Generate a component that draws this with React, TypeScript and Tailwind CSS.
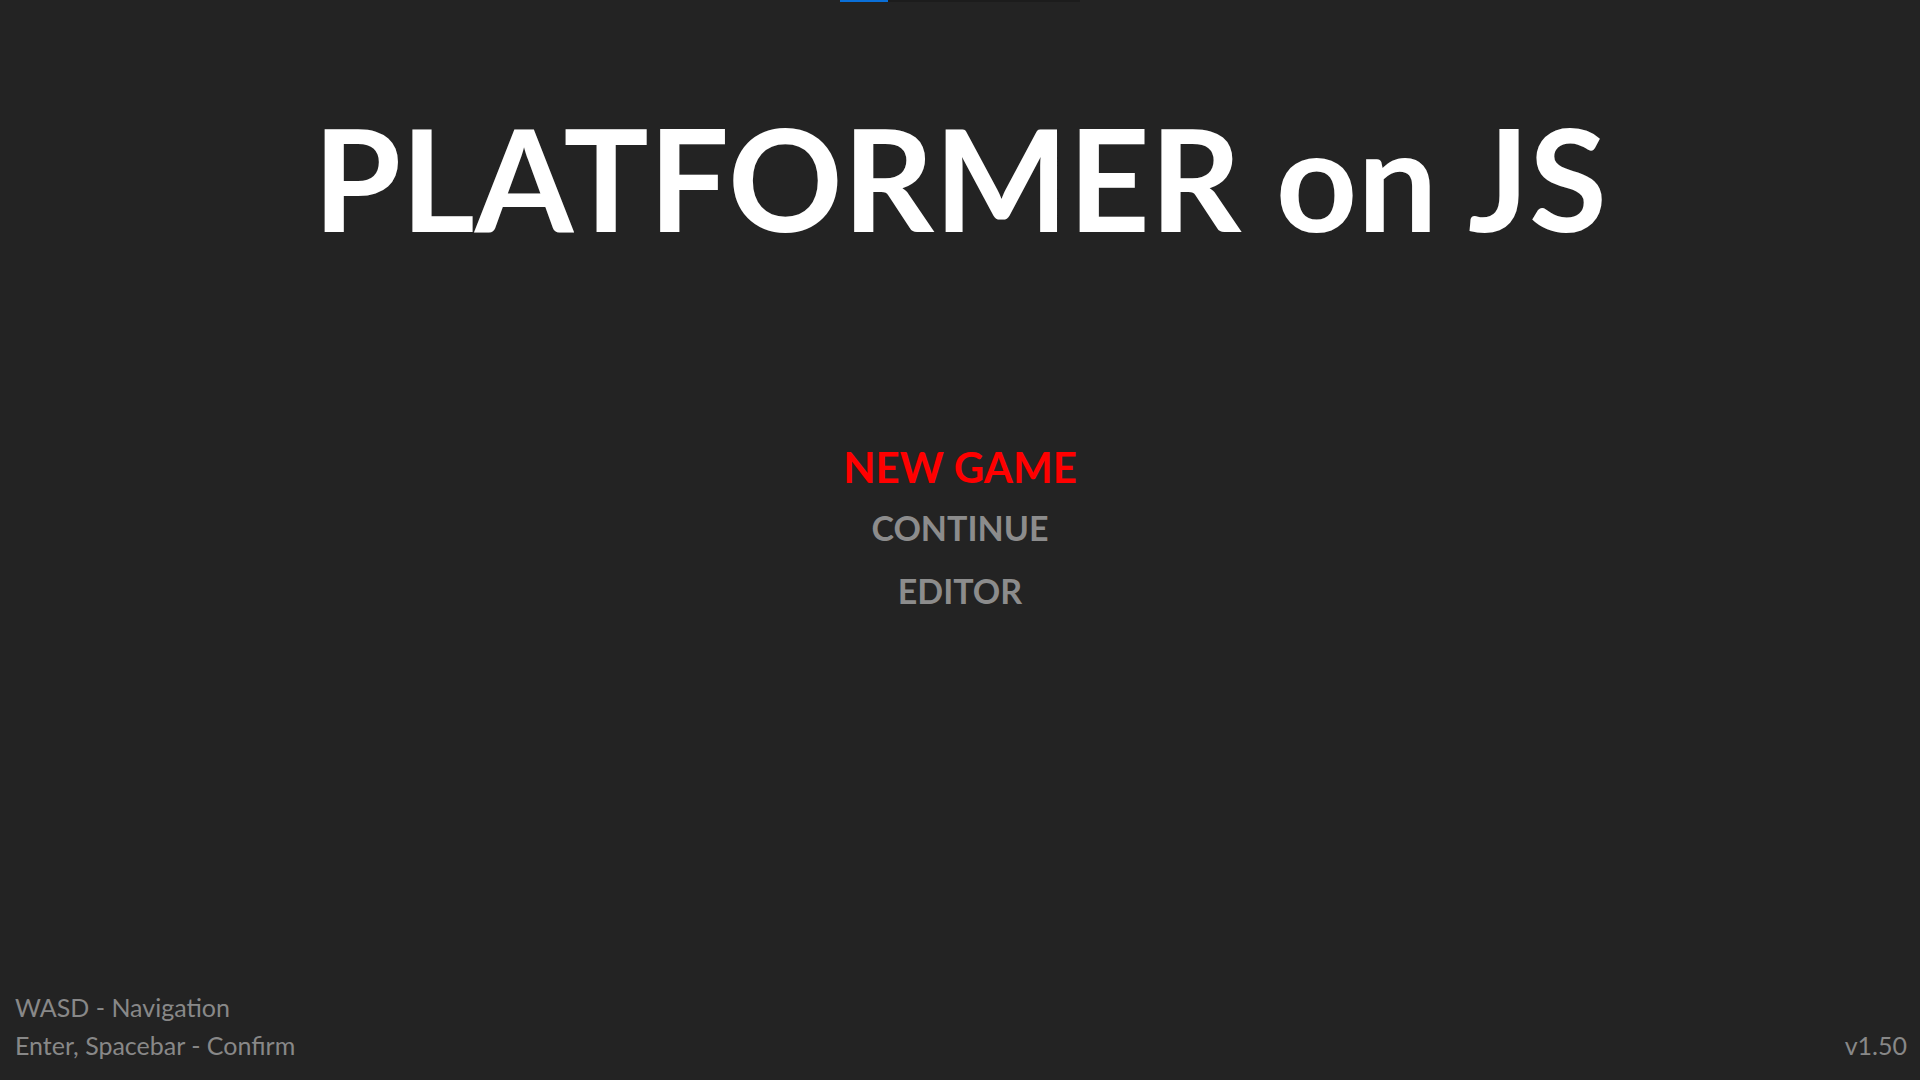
// Main menu screen for the platformer

const menu = [
  { label: "NEW GAME", active: true },
  { label: "CONTINUE", active: false },
  { label: "EDITOR", active: false },
];

export default function App() {
  return (
    <div className="flex flex-col w-full h-screen overflow-hidden bg-[#232323] font-['Lato','Liberation_Sans',sans-serif] select-none">
      {/* Loading bar */}
      <div className="mx-auto w-[240px] h-[2px] bg-[#1c1c1c] shrink-0">
        <div className="h-full w-[48px] bg-[#0a6fd8]" />
      </div>

      <h1 className="mt-[90px] text-center text-[142px] leading-[1.2] font-bold text-white">PLATFORMER on JS</h1>

      <ul className="mt-[176px] flex flex-col items-center">
        {menu.map((m) => (
          <li
            key={m.label}
            className={
              m.active
                ? "text-[42px] leading-[58px] font-bold text-[#ff0000]"
                : "text-[34px] leading-[63px] font-bold text-[#8c8c8c]"
            }
          >
            {m.label}
          </li>
        ))}
      </ul>

      {/* Controls hint + version */}
      <div className="mt-auto flex items-end justify-between pl-[15px] pr-[13px] pb-[16px] text-[25px] leading-[38px] text-[#888888]">
        <div>
          <p>WASD - Navigation</p>
          <p>Enter, Spacebar - Confirm</p>
        </div>
        <p>v1.50</p>
      </div>
    </div>
  );
}
